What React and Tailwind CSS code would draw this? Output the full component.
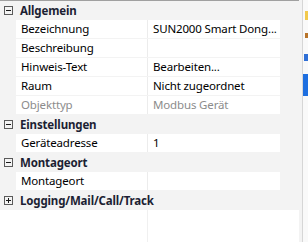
const rows = [
  { type: "group", label: "Allgemein", open: true },
  { type: "prop", name: "Bezeichnung", value: "SUN2000 Smart Dong..." },
  { type: "prop", name: "Beschreibung", value: "" },
  { type: "prop", name: "Hinweis-Text", value: "Bearbeiten..." },
  { type: "prop", name: "Raum", value: "Nicht zugeordnet" },
  { type: "prop", name: "Objekttyp", value: "Modbus Gerät", disabled: true },
  { type: "group", label: "Einstellungen", open: true },
  { type: "prop", name: "Geräteadresse", value: "1" },
  { type: "group", label: "Montageort", open: true },
  { type: "prop", name: "Montageort", value: "" },
  { type: "group", label: "Logging/Mail/Call/Track", open: false },
]

function ToggleBox({ open }) {
  return (
    <svg width="9" height="9" viewBox="0 0 9 9" className="block">
      <rect x="0.5" y="0.5" width="8" height="8" fill="none" stroke="#5a5a5a" />
      <line x1="2" y1="4.5" x2="7" y2="4.5" stroke="#1a1a1a" />
      {!open && <line x1="4.5" y1="2" x2="4.5" y2="7" stroke="#1a1a1a" />}
    </svg>
  )
}

function GroupRow({ label, open }) {
  return (
    <div className="h-[19px] flex items-center">
      <div className="w-[16px] flex justify-center pl-[1px]">
        <ToggleBox open={open} />
      </div>
      <span className="pl-[4px] font-bold text-[#1c1f33]">{label}</span>
    </div>
  )
}

function PropRow({ name, value, disabled }) {
  const tone = disabled ? "text-[#8c8c8c]" : "text-black"
  return (
    <div className="h-[19px] flex">
      <div className="w-[16px] shrink-0" />
      <div className="w-[264px] h-[18px] flex bg-white">
        <div className={`w-[131px] h-full pl-[5px] flex items-center whitespace-nowrap overflow-hidden ${tone}`}>{name}</div>
        <div className="w-px h-full bg-[#ececec]" />
        <div className={`flex-1 h-full pl-[5px] flex items-center whitespace-nowrap ${tone}`}>{value}</div>
      </div>
    </div>
  )
}

export default function App() {
  return (
    <div className="w-[308px] h-[242px] overflow-hidden flex bg-[#f3f3f3] text-[11.5px] tracking-[-0.15px] leading-none" style={{ fontFamily: "'Noto Sans', sans-serif" }}>
      {/* property grid */}
      <div className="w-[299px] flex flex-col border-t border-[#a0a0a0]">
        {rows.map((r, i) =>
          r.type === "group"
            ? <GroupRow key={i} label={r.label} open={r.open} />
            : <PropRow key={i} name={r.name} value={r.value} disabled={r.disabled} />
        )}
        <div className="flex-1 flex bg-white">
          <div className="w-[147px]" />
          <div className="w-px bg-[#f0f0f0]" />
        </div>
      </div>
      <div className="w-[3px] bg-[#f3f3f3]" />
      <div className="w-px bg-[#d6d6d6]" />
      {/* neighbouring panel, mostly clipped */}
      <div className="flex-1 flex flex-col bg-[#f9f9f9] pt-[11px]">
        <div className="ml-[2px] w-[3px] h-[9px] bg-[#f2c94c]" />
        <div className="ml-[2px] mt-[13px] w-[3px] h-[5px] bg-[#b8742a]" />
        <div className="ml-[1px] mt-[16px] w-[4px] h-[7px] bg-[#2f6fd6]" />
        <div className="mt-[13px] w-full h-[22px] bg-[#1e6fe0]" />
      </div>
    </div>
  )
}
